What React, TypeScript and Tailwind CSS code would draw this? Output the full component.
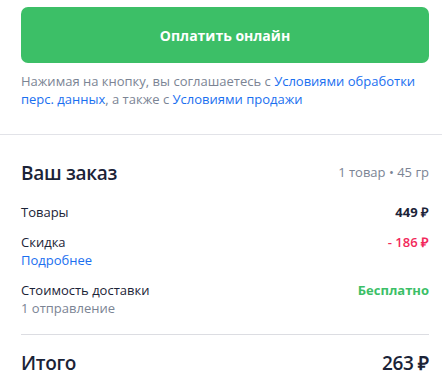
export default function App() {
  return (
    <div className="w-[442px] h-[388px] overflow-hidden bg-white text-[#1b2337] font-['Open_Sans',sans-serif]">
      <div className="pl-[21px] pr-[13px] pt-[7px]">
        <button
          type="button"
          className="w-full h-[56px] rounded-[7px] bg-[#3cbf67] text-white text-[14px] font-bold"
        >
          Оплатить онлайн
        </button>
        <p className="mt-[9px] text-[13px] leading-[18px] text-[#7b8494]">
          Нажимая на кнопку, вы соглашаетесь с{" "}
          <a className="text-[#1a6ff0]">Условиями обработки перс. данных</a>, а также с{" "}
          <a className="text-[#1a6ff0]">Условиями продажи</a>
        </p>
      </div>

      <div className="mt-[26px] border-t border-[#e2e3e8]" />

      <div className="pl-[21px] pr-[13px] pt-[24px]">
        <div className="flex items-center justify-between">
          <h2 className="text-[19px] leading-[28px] font-semibold tracking-[-0.3px]">Ваш заказ</h2>
          <span className="text-[13px] text-[#7b8494]">1 товар • 45 гр</span>
        </div>

        <div className="mt-[16px] flex flex-col gap-[12px] text-[13px] leading-[18px]">
          <div className="flex justify-between">
            <span>Товары</span>
            <span className="font-bold">449 ₽</span>
          </div>
          <div className="flex justify-between">
            <div className="flex flex-col">
              <span>Скидка</span>
              <a className="text-[#1a6ff0]">Подробнее</a>
            </div>
            <span className="font-semibold text-[#f2295b]">- 186 ₽</span>
          </div>
          <div className="flex justify-between">
            <div className="flex flex-col">
              <span>Стоимость доставки</span>
              <span className="text-[#7b8494]">1 отправление</span>
            </div>
            <span className="font-bold text-[#3cbf67]">Бесплатно</span>
          </div>
        </div>

        <div className="mt-[17px] border-t border-[#dcdde2]" />

        <div className="mt-[14px] flex items-center justify-between text-[19px] leading-[28px] font-semibold tracking-[-0.3px]">
          <span>Итого</span>
          <span>263 ₽</span>
        </div>
      </div>
    </div>
  );
}
